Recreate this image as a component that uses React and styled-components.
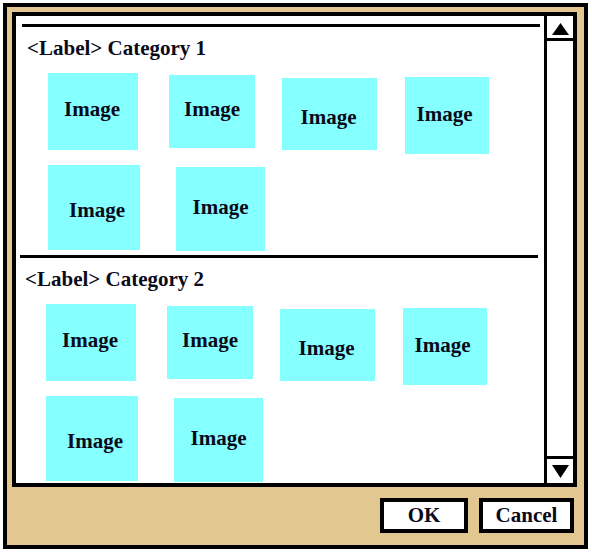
import React from "react"
import styled, { createGlobalStyle } from "styled-components"

const GlobalStyle = createGlobalStyle`
  body {
    margin: 0;
    background: #fff;
    font-family: "Liberation Serif", "Times New Roman", serif;
  }
`

const Frame = styled.div`
  box-sizing: border-box;
  width: 585px;
  height: 546px;
  margin: 3px 0 0 3px;
  padding: 5px 7px 0 5px;
  border: 4px solid #000;
  background: #e2c890;
  display: flex;
  flex-direction: column;
`

const Panel = styled.div`
  box-sizing: border-box;
  height: 475px;
  border: 4px solid #000;
  background: #fff;
  display: flex;
`

const List = styled.div`
  flex: 1;
  overflow: hidden;
  padding-top: 4px;
`

const Section = styled.section`
  padding-top: 4px;
`

const Rule = styled.div`
  width: 518px;
  height: 3px;
  margin-left: ${({ $indent }) => $indent}px;
  background: #000;
`

const Label = styled.h3`
  margin: 9px 0 0;
  padding-left: ${({ $indent }) => $indent + 5}px;
  font-family: "Liberation Serif", "Times New Roman", serif;
  font-size: 21px;
  line-height: 24px;
  font-weight: bold;
  color: #0a0a1a;
`

const Tiles = styled.div`
  display: grid;
  grid-template-columns: 121px 113px 123px 1fr;
  row-gap: 11px;
  align-items: start;
  margin-top: 13px;
  padding-left: ${({ $indent }) => $indent + 26}px;
`

const Tile = styled.div`
  box-sizing: border-box;
  width: ${({ $w }) => $w}px;
  height: ${({ $h }) => $h}px;
  margin: ${({ $top }) => $top}px 0 0 ${({ $left }) => $left || 0}px;
  padding: ${({ $ty }) => Math.max(0, 2 * $ty)}px
    ${({ $tx }) => Math.max(0, -2 * $tx)}px
    ${({ $ty }) => Math.max(0, -2 * $ty)}px
    ${({ $tx }) => Math.max(0, 2 * $tx)}px;
  display: flex;
  align-items: center;
  justify-content: center;
  background: #86ffff;
  font-family: "Liberation Serif", "Times New Roman", serif;
  font-size: 21px;
  line-height: 24px;
  font-weight: bold;
  color: #0a0a1a;
`

const Scrollbar = styled.div`
  box-sizing: border-box;
  width: 29px;
  border-left: 3px solid #000;
  display: flex;
  flex-direction: column;
  justify-content: space-between;
`

const ArrowButton = styled.div`
  display: flex;
  align-items: center;
  justify-content: center;
  height: ${({ $up }) => ($up ? 18 : 24)}px;
  padding-top: ${({ $up }) => ($up ? 4 : 0)}px;
  ${({ $up }) => ($up ? "border-bottom" : "border-top")}: 3px solid #000;
`

const Actions = styled.div`
  display: flex;
  justify-content: flex-end;
  gap: 11px;
  margin: 11px 3px 0 0;
`

const Button = styled.button`
  box-sizing: border-box;
  width: ${({ $w }) => $w}px;
  height: 35px;
  padding: 0;
  border: 4px solid #000;
  background: #fff;
  font-family: "Liberation Serif", "Times New Roman", serif;
  font-size: 21px;
  font-weight: bold;
  color: #0a0a1a;
`

const tiles = [
  { w: 90, h: 77, top: 0, tx: -1, ty: -3 },
  { w: 86, h: 73, top: 2, tx: 0, ty: -3 },
  { w: 95, h: 72, top: 5, tx: -1, ty: 2.5 },
  { w: 84, h: 77, top: 4, tx: -2.5, ty: -2 },
  { w: 92, h: 85, top: 0, tx: 3, ty: 2 },
  { w: 89, h: 84, top: 2, left: 7, tx: 0, ty: -2 },
]

const Category = ({ title, indent }) => (
  <Section>
    <Rule $indent={indent} />
    <Label $indent={indent}>&lt;Label&gt; {title}</Label>
    <Tiles $indent={indent}>
      {tiles.map((t, i) => (
        <Tile
          key={i}
          $w={t.w}
          $h={t.h}
          $top={t.top}
          $left={t.left}
          $tx={t.tx}
          $ty={t.ty}
        >
          Image
        </Tile>
      ))}
    </Tiles>
  </Section>
)

const App = () => (
  <>
    <GlobalStyle />
    <Frame>
      <Panel>
        <List>
          <Category title="Category 1" indent={6} />
          <Category title="Category 2" indent={4} />
        </List>
        <Scrollbar>
          <ArrowButton $up>
            <svg width="17" height="12" viewBox="0 0 17 12">
              <polygon points="8.5,0 17,12 0,12" fill="#000" />
            </svg>
          </ArrowButton>
          <ArrowButton>
            <svg width="17" height="13" viewBox="0 0 17 13">
              <polygon points="0,0 17,0 8.5,13" fill="#000" />
            </svg>
          </ArrowButton>
        </Scrollbar>
      </Panel>
      <Actions>
        <Button $w={88}>OK</Button>
        <Button $w={95}>Cancel</Button>
      </Actions>
    </Frame>
  </>
)

export default App
